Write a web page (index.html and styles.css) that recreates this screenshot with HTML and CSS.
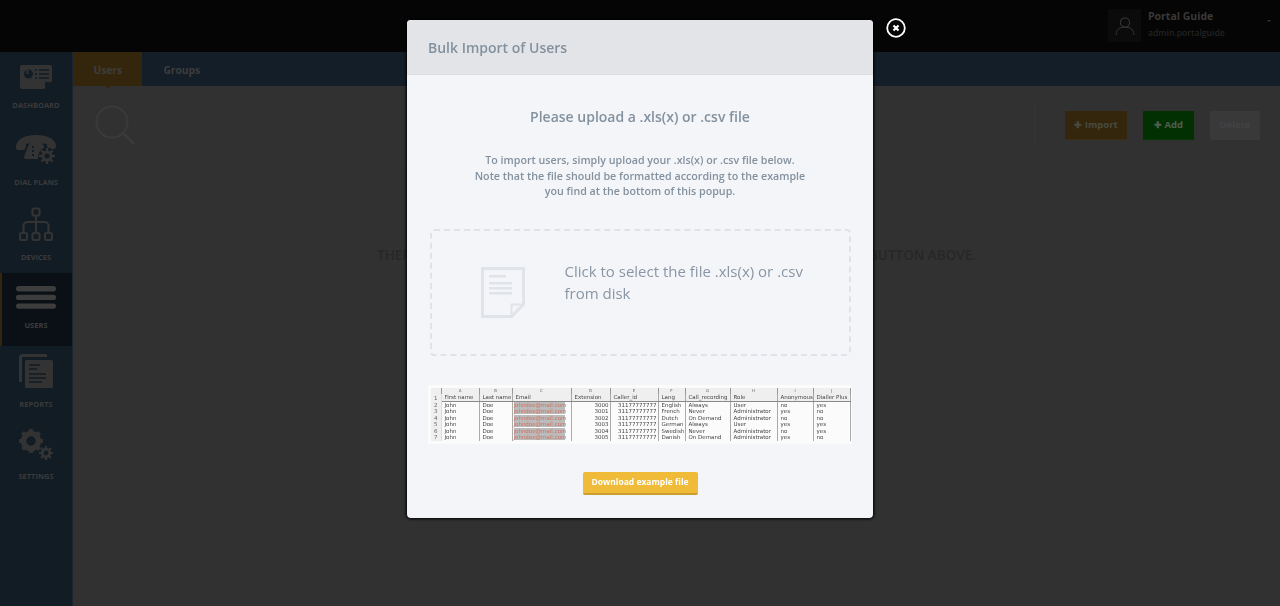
FILE: index.html
```html
<!DOCTYPE html>
<html lang="en">
<head>
	<meta charset="UTF-8">
	<title>Users</title>
	<link rel="stylesheet" href="styles.css">
</head>
<body>
	<div class="app">
		<header class="topbar">
			<div class="user">
				<div class="user-pic">
					<svg width="20" height="20" viewBox="0 0 20 20" fill="none" stroke="#333" stroke-width="1.2"><circle cx="10" cy="6.5" r="4.6"/><path d="M1 19c0-5 3.5-8 9-8s9 3 9 8"/></svg>
				</div>
				<div class="user-info">
					<div class="user-name">Portal Guide</div>
					<div class="user-login">admin.portalguide</div>
				</div>
				<span class="user-caret"></span>
			</div>
		</header>
		<div class="content">
			<nav class="side">
				<a class="side-item side-dash">
					<svg width="32" height="24" viewBox="0 0 32 24"><path fill="#333" d="M2 0h28a2 2 0 0 1 2 2v14l-8 8H2a2 2 0 0 1-2-2V2a2 2 0 0 1 2-2z"/><path fill="#121c25" d="M25 23v-6h6z"/><circle cx="8.500" cy="9" r="4.500" fill="#121c25"/><path fill="#333" d="M8.500 9V4.500h-2V9z"/><path stroke="#121c25" stroke-width="1.300" d="M15 5h2M19 5h10M15 9h2M19 9h10M15 13h2M19 13h10"/></svg>
					<span>DASHBOARD</span>
				</a>
				<a class="side-item side-dial">
					<svg width="42" height="30" viewBox="0 0 42 30"><path fill="#333" d="M1 13C1 3 12 0 21 0s20 3 20 11c0 2-1 3-2 3h-5c-2 0-2-2-2-5-3-1-8-1-11-1-4 0-7 0-10 1 0 4-1 6-3 6H3c-1 0-2-1-2-2z"/><path fill="#333" d="M14 9l3-2h10l1 3 2 3c-4 1-7 5-7 11H11c-1 0-2-1-2-2z"/><g fill="#121c25"><rect x="17" y="11" width="2" height="2"/><rect x="17" y="15" width="2" height="2"/><rect x="17" y="19" width="2" height="2"/></g><circle cx="32" cy="21" r="8.500" fill="#121c25"/><circle cx="32" cy="21" r="4" fill="none" stroke="#333" stroke-width="3"/><path stroke="#333" stroke-width="2.400" d="M32 13v3M32 26v3M24 21h3M37 21h3M26.300 15.300l2 2M35.700 24.700l2 2M26.300 26.700l2-2M35.700 17.300l2-2"/></svg>
					<span>DIAL PLANS</span>
				</a>
				<a class="side-item side-dev">
					<svg width="34" height="34" viewBox="0 0 34 34" fill="none" stroke="#333" stroke-width="2.200"><rect x="13.500" y="1.500" width="7" height="7" rx="1.500"/><rect x="1" y="26" width="7" height="7" rx="1.500"/><rect x="13.500" y="26" width="7" height="7" rx="1.500"/><rect x="26" y="26" width="7" height="7" rx="1.500"/><path d="M17 8.500V26M4.500 26v-7a4 4 0 0 1 4-4h17a4 4 0 0 1 4 4v7"/></svg>
					<span>DEVICES</span>
				</a>
				<a class="side-item side-users active">
					<svg width="40" height="23" viewBox="0 0 40 23" fill="#3d3d3d"><rect width="40" height="5.400" rx="2.700"/><rect y="8.700" width="40" height="5.400" rx="2.700"/><rect y="17.400" width="40" height="5.400" rx="2.700"/></svg>
					<span>USERS</span>
				</a>
				<a class="side-item side-rep">
					<svg width="34" height="34" viewBox="0 0 34 34"><path fill="none" stroke="#333" stroke-width="3" d="M28 1.500H3a1.500 1.500 0 0 0-1.500 1.500v25"/><rect x="6" y="6" width="28" height="28" rx="1.500" fill="#333"/><path stroke="#121c25" stroke-width="1.300" d="M10 11h11M10 15h8M10 20h17M10 24h17M10 28h13"/></svg>
					<span>REPORTS</span>
				</a>
				<a class="side-item side-set">
					<svg width="34" height="31" viewBox="0 0 34 31"><g fill="none" stroke="#333"><circle cx="12" cy="12" r="7.500" stroke-width="5.500"/><path stroke-width="4" d="M12 0v4M12 20v4M0 12h4M20 12h4M3.500 3.500l3 3M17.500 17.500l3 3M3.500 20.500l3-3M17.500 6.500l3-3"/><circle cx="27" cy="24" r="3.800" stroke-width="2.800"/><path stroke-width="2.200" d="M27 17v2M27 29v2M20 24h2M32 24h2M22 19l1.500 1.500M30.500 27.500L32 29M22 29l1.500-1.500M30.500 20.500L32 19"/></g></svg>
					<span>SETTINGS</span>
				</a>
			</nav>
			<main class="main">
				<div class="tabs">
					<a class="tab active">Users</a>
					<a class="tab">Groups</a>
				</div>
				<div class="toolbar">
					<svg class="search" width="42" height="42" viewBox="0 0 42 42" fill="none" stroke="#3a3a3a" stroke-width="2"><circle cx="17" cy="17" r="15.500"/><path stroke-width="3" d="M28 28l11 11"/></svg>
					<div class="actions">
						<a class="btn btn-import"><b>&#10010;</b> Import</a>
						<a class="btn btn-add"><b>&#10010;</b> Add</a>
						<a class="btn btn-delete">Delete</a>
					</div>
				</div>
				<p class="empty">THERE ARE NO USERS YET. TO ADD A NEW USER, PLEASE USE THE ADD USER BUTTON ABOVE.</p>
			</main>
		</div>
	</div>

	<div class="overlay">
		<div class="modal">
			<a class="modal-close">
				<svg width="20" height="20" viewBox="0 0 20 20" fill="none" stroke="#fff"><circle cx="10" cy="10" r="8.800" stroke-width="1.800"/><path stroke-width="2.200" d="M7.500 7.500l5 5M12.500 7.500l-5 5"/></svg>
			</a>
			<div class="modal-head">Bulk Import of Users</div>
			<div class="modal-body">
				<h2>Please upload a .xls(x) or .csv file</h2>
				<p class="intro">To import users, simply upload your .xls(x) or .csv file below.<br>Note that the file should be formatted according to the example<br>you find at the bottom of this popup.</p>
				<div class="drop">
					<svg width="44" height="51" viewBox="0 0 44 51" fill="none" stroke="#e0e3e8"><path stroke-width="3" d="M1.500 1.500h41v36l-12 12h-29z"/><path stroke-width="2" d="M30.500 49v-11.500H42"/><path fill="#e0e3e8" stroke="none" d="M8 8h17v2.500H8zM8 15h23v2.500H8zM8 20h23v2.500H8zM8 25h23v2.500H8z"/></svg>
					<div class="drop-text">Click to select the file .xls(x) or .csv<br>from disk</div>
				</div>
				<div class="sheet">
					<table>
						<colgroup>
							<col class="c-n"><col class="c-a"><col class="c-b"><col class="c-c"><col class="c-d"><col class="c-e"><col class="c-f"><col class="c-g"><col class="c-h"><col class="c-i"><col class="c-j">
						</colgroup>
						<tr class="letters"><th></th><th>A</th><th>B</th><th>C</th><th>D</th><th>E</th><th>F</th><th>G</th><th>H</th><th>I</th><th>J</th></tr>
						<tr class="names"><th>1</th><td>First name</td><td>Last name</td><td>Email</td><td>Extension</td><td>Caller_id</td><td>Lang</td><td>Call_recording</td><td>Role</td><td>Anonymous</td><td>Dialler Plus</td></tr>
						<tr><th>2</th><td>John</td><td>Doe</td><td><span class="mail">johndoe@mail.com</span></td><td class="num">3000</td><td class="num">31177777777</td><td>English</td><td>Always</td><td>User</td><td>no</td><td>yes</td></tr>
						<tr><th>3</th><td>John</td><td>Doe</td><td><span class="mail">johndoe@mail.com</span></td><td class="num">3001</td><td class="num">31177777777</td><td>French</td><td>Never</td><td>Administrator</td><td>yes</td><td>no</td></tr>
						<tr><th>4</th><td>John</td><td>Doe</td><td><span class="mail">johndoe@mail.com</span></td><td class="num">3002</td><td class="num">31177777777</td><td>Dutch</td><td>On Demand</td><td>Administrator</td><td>no</td><td>no</td></tr>
						<tr><th>5</th><td>John</td><td>Doe</td><td><span class="mail">johndoe@mail.com</span></td><td class="num">3003</td><td class="num">31177777777</td><td>German</td><td>Always</td><td>User</td><td>yes</td><td>yes</td></tr>
						<tr><th>6</th><td>John</td><td>Doe</td><td><span class="mail">johndoe@mail.com</span></td><td class="num">3004</td><td class="num">31177777777</td><td>Swedish</td><td>Never</td><td>Administrator</td><td>no</td><td>yes</td></tr>
						<tr><th>7</th><td>John</td><td>Doe</td><td><span class="mail">johndoe@mail.com</span></td><td class="num">3005</td><td class="num">31177777777</td><td>Danish</td><td>On Demand</td><td>Administrator</td><td>yes</td><td>no</td></tr>
					</table>
				</div>
				<a class="download">Download example file</a>
			</div>
		</div>
	</div>
</body>
</html>
```

FILE: styles.css
```css
*{margin: 0;padding: 0;box-sizing: border-box;}
html,body{height: 100%;overflow: hidden;}
body{font-family: "Open Sans", "Liberation Sans", sans-serif;background: #313131;}

.app{height: 606px;display: flex;flex-direction: column;}

/* top bar */
.topbar{height: 52px;background: #050505;display: flex;justify-content: flex-end;}
.user{width: 172px;display: flex;padding-top: 9px;}
.user-pic{width: 33px;height: 33px;background: #0b0b0b;display: flex;align-items: center;justify-content: center;}
.user-info{margin-left: 7px;}
.user-name{font-size: 10.5px;font-weight: 700;color: #393939;line-height: 14px;}
.user-login{font-size: 8.600px;font-weight: 600;color: #232323;line-height: 14px;margin-top: 3px;}
.user-caret{margin: 11px 0 0 42px;width: 0;height: 0;border: 2px solid transparent;border-top-color: #333;}

.content{flex: 1;display: flex;}

/* sidebar */
.side{width: 73px;background: #121c25;border-right: 1px solid #1c2630;}
.side-item{display: flex;flex-direction: column;align-items: center;color: #3a3a3a;font-size: 7.500px;font-weight: 700;}
.side-item span{line-height: 12px;}
.side-dash{height: 73px;padding-top: 13px;}
.side-dash span{margin-top: 10px;}
.side-dial{height: 75px;padding-top: 10px;}
.side-dial span{margin-top: 11px;}
.side-dev{height: 73px;padding-top: 7px;}
.side-dev span{margin-top: 10px;}
.side-users{height: 73px;padding-top: 13px;}
.side-users span{margin-top: 10px;}
.side-rep{height: 72px;padding-top: 8px;}
.side-rep span{margin-top: 10px;}
.side-set{height: 72px;padding-top: 11px;}
.side-set span{margin-top: 10px;}
.side-item.active{background: #0a1016;box-shadow: inset 2px 0 0 #33260c;color: #3d3d3d;}

/* main */
.main{flex: 1;display: flex;flex-direction: column;}
.tabs{height: 34px;background: #141e28;display: flex;}
.tab{padding: 0 21px;line-height: 36px;font-size: 10.200px;font-weight: 700;color: #3d3d3d;position: relative;}
.tab.active{background: #34260c;padding: 0 20.500px;}
.tab.active:after{content: "";position: absolute;left: 50%;top: 100%;margin-left: -3px;border: 3px solid transparent;border-top-color: #34260c;}

.toolbar{height: 79px;padding: 19px 20px 0 22px;display: flex;justify-content: space-between;border-bottom: 1px solid #333;}
.actions{display: flex;align-items: flex-start;gap: 16px;margin-top: 6px;position: relative;}
.actions:before{content: "";position: absolute;left: -31px;top: -6px;width: 1px;height: 40px;background: #353535;}
.btn{height: 29px;line-height: 27px;text-align: center;white-space: nowrap;font-size: 9.500px;font-weight: 700;color: #4a4a3e;border-radius: 1px;}
.btn b{font-size: 9px;}
.btn-import{background: #33260c;border-bottom: 1px solid #3c2d0e;width: 62px;}
.btn-add{background: #023002;color: #4f5f4f;border-bottom: 1px solid #033a03;width: 51px;}
.btn-delete{background: #39393a;color: #424244;width: 50px;}

.empty{margin-top: 81px;text-align: center;font-size: 13.500px;font-weight: 600;color: #272727;line-height: 18px;white-space: nowrap;}

/* popup */
.overlay{position: fixed;left: 0;top: 0;right: 0;bottom: 0;display: flex;justify-content: center;align-items: flex-start;padding-top: 20px;}
.modal{width: 466px;height: 498px;background: #f4f5f8;border-radius: 4px;position: relative;box-shadow: 0 0 3px 1px #000;}
.modal-close{position: absolute;left: 479px;top: -2px;}
.modal-head{height: 55px;line-height: 56px;padding-left: 21px;background: #e2e4e7;border-bottom: 1px solid #dcdee1;border-radius: 4px 4px 0 0;font-size: 14px;font-weight: 600;color: #83919f;}
.modal-body{display: flex;flex-direction: column;align-items: center;}
.modal-body h2{margin-top: 32px;font-size: 14px;line-height: 20px;font-weight: 600;color: #83919f;}
.intro{margin-top: 26px;font-size: 10.700px;line-height: 15.500px;font-weight: 600;text-align: center;color: #83919f;}
.drop{margin-top: 29px;width: 421px;height: 127px;border: 2px dashed #dfe2e6;border-radius: 4px;display: flex;align-items: center;padding-left: 49px;gap: 40px;}
.drop-text{font-size: 15px;line-height: 22px;color: #8a96a5;margin-top: -20px;}

/* example sheet */
.sheet{margin-top: 29px;width: 424px;height: 59px;background: #fbfbfb;padding: 3px 0 0 3px;overflow: hidden;}
.sheet table{border-collapse: collapse;table-layout: fixed;width: 419px;font-family: "DejaVu Sans", sans-serif;font-size: 5.500px;color: #444;filter: blur(.4px);}
.sheet th{background: #efefef;font-weight: 400;color: #666;border-right: 1px solid #ddd;height: 6.500px;padding: 0;}
.sheet td{border-right: 1px solid #aaa;padding: 0 0 0 3px;height: 6.500px;white-space: nowrap;overflow: hidden;}
.sheet tr{line-height: 6px;}
.sheet .letters th{font-size: 4px;border-right-color: #999;height: 6px;}
.sheet .names th{height: 8px;}
.sheet .names td{height: 8px;background: #efefef;border-bottom: 1px solid #888;}
.sheet .mail{display: block;background: #bbb;color: #d0705f;margin-left: -2px;width: 51px;}
.sheet .num{text-align: right;padding-right: 1px;}
.c-n{width: 10px;}
.c-a{width: 38px;}
.c-b{width: 33px;}
.c-c{width: 59px;}
.c-d{width: 39px;}
.c-e{width: 48px;}
.c-f{width: 27px;}
.c-g{width: 45px;}
.c-h{width: 47px;}
.c-i{width: 36px;}
.c-j{width: 37px;}

.download{margin-top: 28px;width: 115px;height: 23px;line-height: 20px;background: #efbb38;border-bottom: 2px solid #cc9e2d;border-radius: 2px;text-align: center;color: #fff;font-size: 8.500px;font-weight: 700;}
```
